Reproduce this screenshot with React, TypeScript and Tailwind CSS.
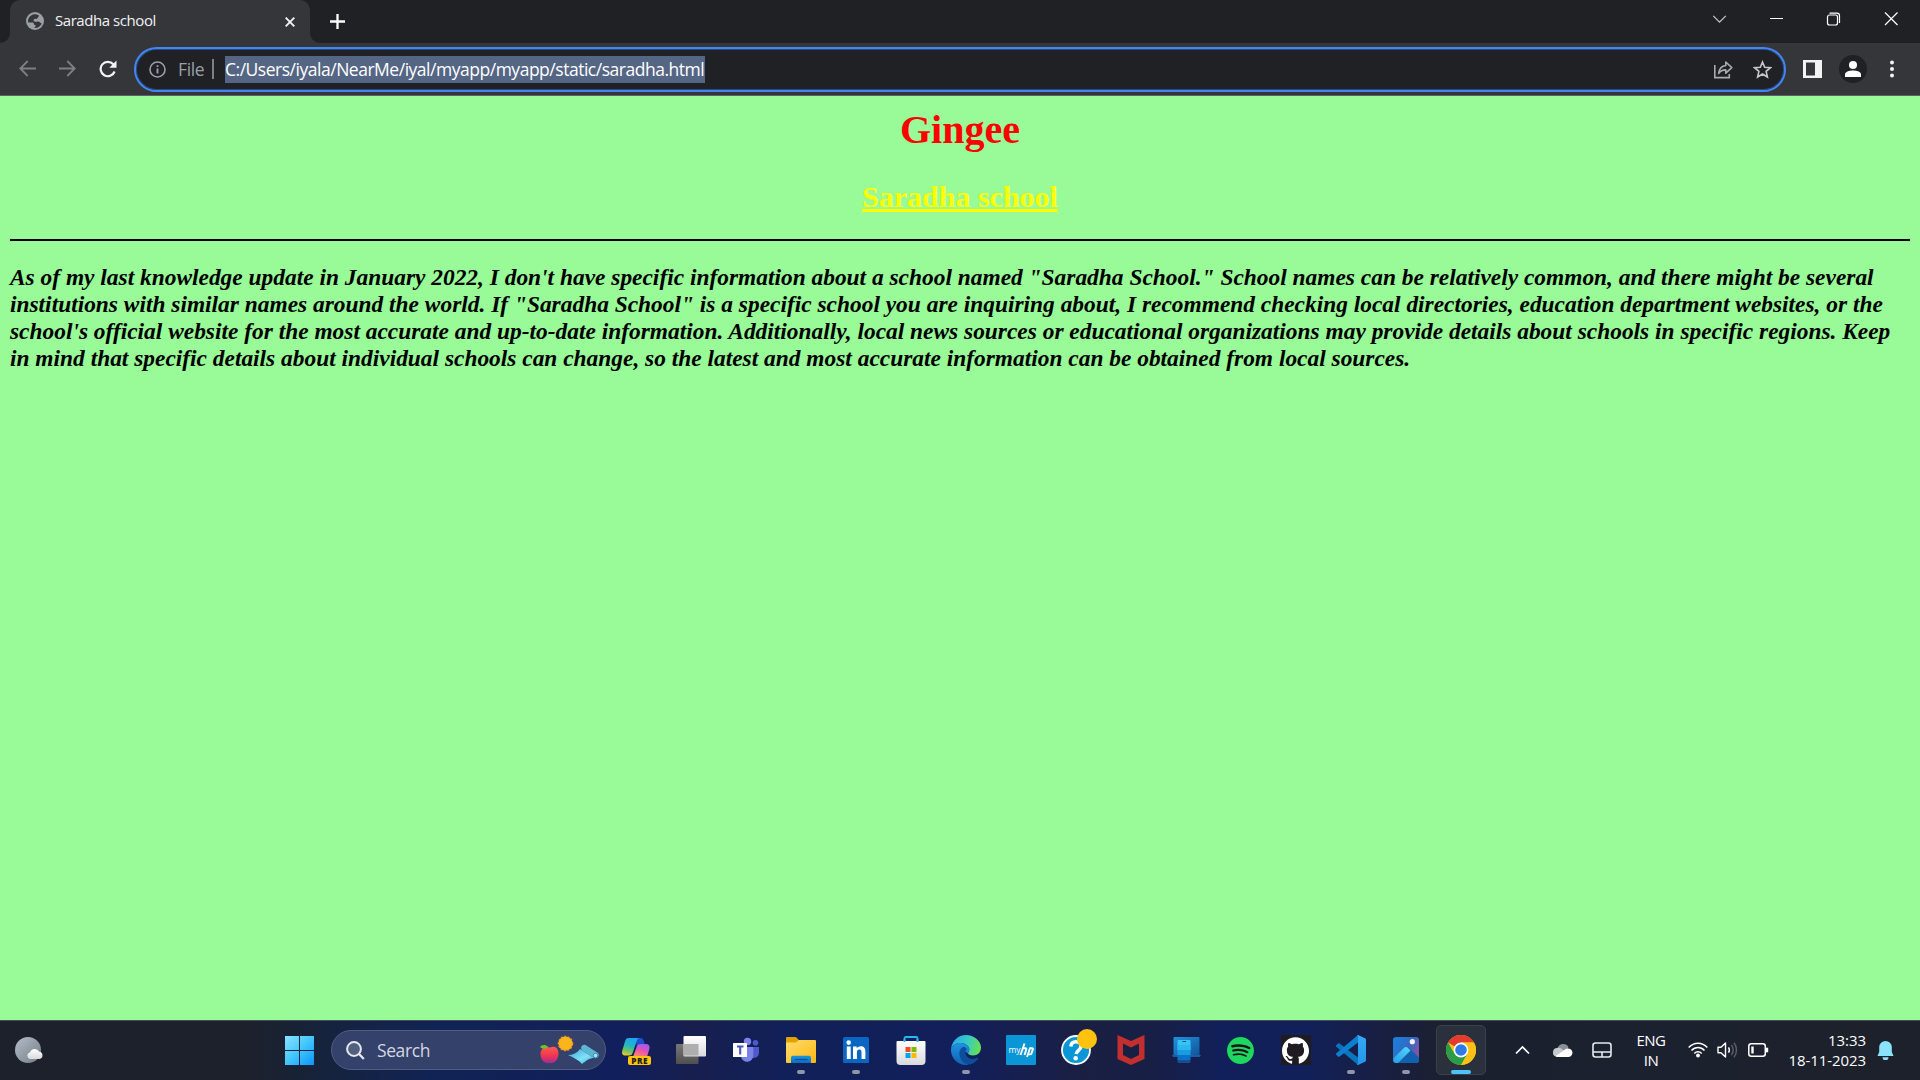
import type { ReactNode } from "react";
import { SiSpotify, SiGithub } from "react-icons/si";

const ui = "font-['Open_Sans','Noto_Sans',sans-serif]";

function TabStrip() {
  return (
    <div className="flex h-[43px] shrink-0 bg-[#202124]">
      <div className="flex w-[10px] items-end bg-[#35363a]">
        <div className="h-full w-full rounded-br-[10px] bg-[#202124]" />
      </div>
      <div className="w-[300px] bg-[#202124]">
        <div className="flex h-[43px] items-center rounded-t-[10px] bg-[#35363a] pl-4">
          <svg className="mt-[-1px] size-[18px]" viewBox="0 0 18 18">
            <circle cx="9" cy="9" r="9" fill="#9aa0a6" />
            <path d="M8 2.200C6 2.600 4 3.800 2.900 5.800 1.700 8 2 10 2.200 10.500c2 .1 3.500 0 4.500.1 1.700.3.800 1.600 1.600 2.200.5.300 1.400.1 1.400 1.200L8.200 16c3.600.4 6.300-1.500 7.500-4.500-1.700-.5-2-1.800-3.300-1.900-1.400-.1-2.800.7-4-.1-1.400-.9-.9-2.300.1-2.600 1.100-.3 1.700.5 2.700-.3.800-.6.300-1.200 1.300-1.800L13 3.400C11.300 2.400 9.700 2 8 2.200z" fill="#35363a" />
          </svg>
          <span className={`${ui} ml-[11px] mt-[-2px] w-[230px] whitespace-nowrap text-[15px] tracking-[-0.440px] text-[#f1f3f4]`}>
            Saradha school
          </span>
          <svg className="size-[10px] shrink-0" viewBox="0 0 10 10" stroke="#f1f3f4" strokeWidth="1.900">
            <path d="M.7.7l8.600 8.600M9.300.7L.7 9.300" />
          </svg>
        </div>
      </div>
      <div className="w-[10px] bg-[#35363a]">
        <div className="h-full w-full rounded-bl-[10px] bg-[#202124]" />
      </div>
      <svg className="ml-[10px] mt-[14px] size-[15px]" viewBox="0 0 15 15" stroke="#fff" strokeWidth="2.300">
        <path d="M7.500 0v15M0 7.500h15" />
      </svg>
      <div className="ml-auto flex h-[37px] items-center text-white">
        <svg className="w-[57px]" height="14" viewBox="0 0 57 14" fill="none" stroke="#c8cacc" strokeWidth="1.200">
          <path d="M21.300 3.800l6.200 6.300 6.300-6.300" />
        </svg>
        <svg className="w-[57px]" height="14" viewBox="0 0 57 14" stroke="currentColor" strokeWidth="1">
          <path d="M21 6.500h13" />
        </svg>
        <svg className="w-[57px]" height="14" viewBox="0 0 57 14" fill="none" stroke="currentColor" strokeWidth="1.200">
          <rect x="21.500" y="3" width="10" height="10" rx="2" />
          <path d="M23.500 1.200h7.500a2.500 2.500 0 0 1 2.500 2.500V11" />
        </svg>
        <svg className="w-[57px]" height="14" viewBox="0 0 57 14" stroke="currentColor" strokeWidth="1.200">
          <path d="M22 .5l12.500 12.500M34.500.5L22 13" />
        </svg>
      </div>
    </div>
  );
}

function Toolbar() {
  return (
    <div className="flex h-[53px] shrink-0 items-center border-b border-[#5d6164] bg-[#35363a]">
      <svg className="ml-[19px] mt-[-1px] size-[17px]" viewBox="0 0 17 17" fill="none" stroke="#7d7f83" strokeWidth="1.800">
        <path d="M17 8.500H1.500M8.700 1L1.300 8.500l7.400 7.500" />
      </svg>
      <svg className="ml-[23px] mt-[-1px] size-[17px]" viewBox="0 0 17 17" fill="none" stroke="#7d7f83" strokeWidth="1.800">
        <path d="M0 8.500h15.500M8.300 1l7.400 7.500L8.300 16" />
      </svg>
      <svg className="ml-[23px] mt-[-1px] size-[18px]" viewBox="0 0 18 18" fill="none" stroke="#f1f3f4" strokeWidth="2.200">
        <path d="M15.600 11.500a7.200 7.200 0 1 1-1.300-7.200l2 2.200" />
        <path d="M17.500.5v7.200h-7.200z" fill="#f1f3f4" stroke="none" />
      </svg>
      <div className="ml-[17px] flex h-[45px] w-[1652px] items-center rounded-full border-2 border-[#4285f4] bg-[#202124] shadow-[inset_0_0_0_1px_#2c4778]">
        <svg className="ml-[13px] size-[17px]" viewBox="0 0 17 17" fill="none" stroke="#9aa0a6" strokeWidth="1.600">
          <circle cx="8.500" cy="8.500" r="7.500" />
          <path d="M8.500 7.500v5M8.500 4.200v1.900" strokeWidth="1.900" />
        </svg>
        <span className={`${ui} ml-3 w-[34px] text-[17.500px] tracking-[-0.400px] text-[#9aa0a6]`}>File</span>
        <div className="h-5 w-[2px] bg-[#7c8085]" />
        <div className={`${ui} ml-[11px] h-[27px] w-[480px] whitespace-nowrap bg-[#556685] text-[17.500px] leading-[27px] tracking-[-0.480px] text-white`}>
          C:/Users/iyala/NearMe/iyal/myapp/myapp/static/saradha.html
        </div>
        <svg className="ml-auto size-[19px]" viewBox="0 0 19 19" fill="none" stroke="#a9abae" strokeWidth="1.600">
          <path d="M.8 5v12.600h14.500V14" />
          <path d="M4.600 13.500c.6-5 3-7.500 7.200-8V2l6 5.600-6 5.600v-3.300c-3.200 0-5.400 1-7.200 3.600z" strokeLinejoin="round" />
        </svg>
        <svg className="ml-[20px] mr-[12px] size-[19px]" viewBox="0 0 19 19" fill="none" stroke="#c6c9cb" strokeWidth="1.600">
          <path d="M9.500 2l2.200 5.200 5.700.5-4.300 3.700 1.300 5.600-4.900-3-4.900 3 1.300-5.600L1.600 7.700l5.700-.5z" />
        </svg>
      </div>
      <svg className="ml-[17px] h-[18px] w-[19px]" viewBox="0 0 19 18">
        <path fill="#f1f3f4" fillRule="evenodd" d="M0 0h19v18H0zM3 2.500v13h9v-13z" />
      </svg>
      <div className="ml-[17px] flex size-7 items-center justify-center rounded-full bg-[#202124]">
        <svg className="size-4" viewBox="0 0 16 16" fill="#fff">
          <circle cx="8" cy="4" r="4" />
          <path d="M0 16v-2.500C0 10.800 4 9.500 8 9.500s8 1.300 8 4V16z" />
        </svg>
      </div>
      <svg className="ml-[23px] h-[18px] w-1" viewBox="0 0 4 18" fill="#f1f3f4">
        <circle cx="2" cy="2.500" r="2" />
        <circle cx="2" cy="9" r="2" />
        <circle cx="2" cy="15.500" r="2" />
      </svg>
    </div>
  );
}

function Page() {
  return (
    <main className="flex-1 bg-[#98fb98] px-[10px] pt-[11px] font-['Liberation_Serif',serif] font-bold text-black">
      <h1 className="text-center text-[40px] leading-[46px] text-[#ff0000]">Gingee</h1>
      <h2 className="mt-[27px] text-center text-[30px] leading-[34px] text-[#ffff00] underline">Saradha school</h2>
      <div className="mt-[25px] h-[2px] bg-black" />
      <p className="mt-[23px] whitespace-nowrap text-[23.400px] italic leading-[27px] tracking-[0.004px]">
        As of my last knowledge update in January 2022, I don't have specific information about a school named "Saradha School." School names can be relatively common, and there might be several
        <br />
        institutions with similar names around the world. If "Saradha School" is a specific school you are inquiring about, I recommend checking local directories, education department websites, or the
        <br />
        school's official website for the most accurate and up-to-date information. Additionally, local news sources or educational organizations may provide details about schools in specific regions. Keep
        <br />
        in mind that specific details about individual schools can change, so the latest and most accurate information can be obtained from local sources.
      </p>
    </main>
  );
}

function Icon({ children }: { children: ReactNode }) {
  return (
    <svg className="size-[30px]" viewBox="0 0 30 30">
      {children}
    </svg>
  );
}

function TaskbarApp({ children, state }: { children: ReactNode; state?: "open" | "active" }) {
  return (
    <div className="flex w-[55px] items-center justify-center">
      <div
        className={
          state === "active"
            ? "relative flex size-[50px] items-center justify-center rounded-[5px] border border-[#3b414c] bg-[#2a303c]"
            : "relative flex size-[50px] items-center justify-center"
        }
      >
        {children}
        {state === "open" && <i className="absolute bottom-[1px] left-[21px] h-1 w-2 rounded-full bg-[#9095a8]" />}
        {state === "active" && <i className="absolute bottom-0 left-[14px] h-1 w-5 rounded-full bg-[#4cc2ff]" />}
      </div>
    </div>
  );
}

function Gradients() {
  return (
    <svg className="absolute size-0">
      <defs>
        <linearGradient id="win" x1="0" y1="0" x2="1" y2="1"><stop stopColor="#8be3ff" /><stop offset=".5" stopColor="#41c6fb" /><stop offset="1" stopColor="#0a96ff" /></linearGradient>
        <linearGradient id="moon" x1="0" y1="0" x2="1" y2="1"><stop stopColor="#b4bdc7" /><stop offset="1" stopColor="#737d89" /></linearGradient>
        <linearGradient id="apple" x1="0" y1="0" x2="0" y2="1"><stop stopColor="#ff5a52" /><stop offset=".55" stopColor="#f0364f" /><stop offset="1" stopColor="#a32a9a" /></linearGradient>
        <linearGradient id="mat" x1="0" y1="0" x2="1" y2="1"><stop stopColor="#3aa8d8" /><stop offset=".6" stopColor="#7fe3f7" /><stop offset="1" stopColor="#39a4cf" /></linearGradient>
        <linearGradient id="copA" x1=".6" y1="0" x2=".3" y2="1"><stop stopColor="#1fa4f4" /><stop offset=".45" stopColor="#24b5c4" /><stop offset=".75" stopColor="#6cc464" /><stop offset="1" stopColor="#e6c92e" /></linearGradient>
        <linearGradient id="copB" x1=".7" y1="0" x2=".3" y2="1"><stop stopColor="#9a5cf0" /><stop offset=".5" stopColor="#e552b5" /><stop offset="1" stopColor="#ff8a5c" /></linearGradient>
        <linearGradient id="white" x1="0" y1="0" x2="0" y2="1"><stop stopColor="#fff" /><stop offset="1" stopColor="#d9dadd" /></linearGradient>
        <linearGradient id="gray" x1="0" y1="0" x2="0" y2="1"><stop stopColor="#777" /><stop offset="1" stopColor="#4f4f4f" /></linearGradient>
        <linearGradient id="folder" x1="0" y1="0" x2="1" y2="1"><stop stopColor="#ffdc6b" /><stop offset="1" stopColor="#fcb813" /></linearGradient>
        <linearGradient id="pocket" x1="0" y1="0" x2="0" y2="1"><stop stopColor="#1a94e0" /><stop offset="1" stopColor="#0b6cbd" /></linearGradient>
        <linearGradient id="edgeA" x1="0" y1=".4" x2="1" y2=".6"><stop stopColor="#2aa7e8" /><stop offset=".5" stopColor="#35c9c8" /><stop offset="1" stopColor="#6be04e" /></linearGradient>
        <linearGradient id="edgeB" x1="0" y1="0" x2="0" y2="1"><stop stopColor="#1e94e0" /><stop offset="1" stopColor="#1160b4" /></linearGradient>
        <linearGradient id="phoneA" x1="0" y1="0" x2="1" y2="1"><stop stopColor="#2192dc" /><stop offset="1" stopColor="#10559c" /></linearGradient>
        <linearGradient id="photo" x1="0" y1="0" x2="1" y2=".6"><stop stopColor="#1582e0" /><stop offset=".6" stopColor="#3569c0" /><stop offset="1" stopColor="#8554a8" /></linearGradient>
        <linearGradient id="hill" x1="1" y1="0" x2="0" y2="1"><stop stopColor="#59d5fb" /><stop offset="1" stopColor="#229fe8" /></linearGradient>
        <linearGradient id="code" x1="0" y1="0" x2="0" y2="1"><stop stopColor="#37a9f5" /><stop offset="1" stopColor="#2196ec" /></linearGradient>
      </defs>
    </svg>
  );
}

function Taskbar() {
  return (
    <footer className={`${ui} flex h-[60px] shrink-0 items-center border-t border-[#474c5c] pb-px bg-[linear-gradient(90deg,#1d212b_0px,#1c212c_250px,#15233f_335px,#112354_430px,#111f5c_620px,#171f4e_690px,#112058_780px,#121f5b_960px,#1a1f42_1080px,#171f46_1160px,#11205a_1220px,#112058_1310px,#171f45_1370px,#1c202e_1450px,#1b212f_1600px,#1d212b_1920px)]`}>
      <Gradients />
      <svg className="ml-[14px] h-[28px] w-[30px]" viewBox="0 0 30 28">
        <circle cx="14" cy="14" r="13" fill="url(#moon)" />
        <path d="M16 23a3.500 3.500 0 0 1 0-6.800 5 5 0 0 1 9.200-.5A3.700 3.700 0 0 1 25.500 23z" fill="url(#white)" />
      </svg>
      <svg className="ml-[241px] size-[29px]" viewBox="0 0 29 29" fill="url(#win)">
        <path d="M0 0h14v14H0zM15 0h14v14H15zM0 15h14v14H0zM15 15h14v14H15z" />
      </svg>
      <div className="ml-[17px] flex h-10 w-[275px] items-center rounded-full border border-[#515c80] bg-[#34416a]">
        <svg className="ml-[14px] size-[19px]" viewBox="0 0 19 19" fill="none" stroke="#e6e8ee" strokeWidth="2">
          <circle cx="8" cy="8" r="6.900" fill="#52607f" />
          <path d="M12.800 12.800l5 5.200" strokeWidth="2.300" />
        </svg>
        <span className="ml-[12px] text-[17.500px] leading-[22px] tracking-[-0.400px] text-[#d3d7e2]">Search</span>
        <svg className="ml-auto mr-[6px] h-[30px] w-[60px]" viewBox="0 0 60 30">
          <path d="M11 12.500c5-2 8.500 1 8.500 6 0 6-4 10.500-9 9.500-5 1-9-3-9-9 0-5 4.500-8.500 9.500-6.500z" fill="url(#apple)" />
          <path d="M1 12c1.500-2.500 5.500-3 8-.2-2 2.500-5.500 2.700-8 .2z" fill="#6cc430" />
          <circle cx="26.500" cy="8.500" r="7" fill="#fbb51c" stroke="#f79420" strokeWidth="1.500" strokeDasharray="2 1.500" />
          <path d="M29 20c5 0 9-2 12-6l14 9c-4 0-7 2-12 6-3-4-8-6-14-9z" fill="url(#mat)" />
          <path d="M42 12.500c.5-2 2.500-3.500 4.500-2.500L59 18c2 2 0 6-4 5L42.500 15z" fill="#5cb6d2" />
          <circle cx="56.500" cy="20.500" r="2.300" fill="#a6e2ee" stroke="#3489ae" />
        </svg>
      </div>
      <div className="ml-[2px] flex">
        <TaskbarApp>
          <Icon>
            <path d="M14.500 3h5c2 0 2.700 1 3.300 3l1 3.500h-4.500c-2 0-3 .8-3.500 2.500z" fill="#1d50cf" />
            <path d="M7.500 3H19c-2 0-2.700 1.300-3.300 3L12 17c-.8 2.500-1.800 3.500-4 3.500H4.500c-3 0-4-2-3.200-5L4 6.500C4.700 4 5.500 3 7.500 3z" fill="url(#copA)" />
            <path d="M20 9h4.500c3.500 0 4.700 2 3.700 5.500L26 22h-14l3.800-10.500C16.500 9.700 17.500 9 20 9z" fill="url(#copB)" />
            <rect x="7" y="21" width="23" height="9" rx="2" fill="#ffc40c" />
            <text x="18.700" y="28.500" textAnchor="middle" fontFamily="Open Sans" fontWeight="800" fontSize="8.200" letterSpacing=".5" fill="#1b1b1b">PRE</text>
          </Icon>
        </TaskbarApp>
        <TaskbarApp>
          <Icon>
            <rect x="0" y="9" width="22.500" height="20" rx="1" fill="url(#gray)" />
            <rect x="7.500" y="1" width="22.500" height="20.500" rx="1" fill="url(#white)" />
            <path d="M7.500 9h15v11.500h-14l-1-1z" fill="#aeaeae" />
          </Icon>
        </TaskbarApp>
        <TaskbarApp>
          <Icon>
            <circle cx="24.500" cy="7.700" r="2.800" fill="#5059c9" />
            <path d="M20 12h8v6.500a5 5 0 0 1-8 3.500z" fill="#5059c9" />
            <circle cx="16.500" cy="6.500" r="3.700" fill="#7b83eb" />
            <path d="M10 12h12.300v8a6.200 6.200 0 0 1-12.300 1.500z" fill="#7b83eb" />
            <rect x="2" y="8" width="14" height="14" rx=".5" fill="#fff" />
            <path d="M6 11.500h6.500M9.200 11.500v8" stroke="#4b53bc" strokeWidth="2.100" />
          </Icon>
        </TaskbarApp>
        <TaskbarApp state="open">
          <Icon>
            <path d="M0 8V3a1 1 0 0 1 1-1h8.500c1.500 0 2 2.500 3.500 3v4z" fill="#e2a106" />
            <path d="M0 7.500h10L13 5h16a1 1 0 0 1 1 1v21a1 1 0 0 1-1 1H1a1 1 0 0 1-1-1z" fill="url(#folder)" />
            <path d="M5 28v-5.500a1.700 1.700 0 0 1 1.700-1.700h16.600a1.700 1.700 0 0 1 1.700 1.700V28z" fill="url(#pocket)" />
            <path d="M9 24.500h12.500" stroke="#0a4f92" strokeWidth="1.200" />
          </Icon>
        </TaskbarApp>
        <TaskbarApp state="open">
          <Icon>
            <rect x="2" y="2" width="26" height="26" rx="1.500" fill="#0a66c2" />
            <circle cx="7.700" cy="7.600" r="2.300" fill="#fff" />
            <path fill="#fff" d="M5.800 11.500h3.900V24H5.800zM12 11.500h3.700v1.700c.6-1 2-2 4-2 3.900 0 4.700 2.500 4.700 6V24h-3.900v-6c0-1.700-.2-3.400-2.200-3.400-2 0-2.400 1.600-2.400 3.300V24H12z" />
          </Icon>
        </TaskbarApp>
        <TaskbarApp>
          <Icon>
            <path d="M8.500 7V3.300a1.300 1.300 0 0 1 1.300-1.300h10.400a1.300 1.300 0 0 1 1.300 1.300V7" fill="none" stroke="#28b8f0" strokeWidth="1.800" />
            <path d="M.5 7A1 1 0 0 1 1.500 6h27a1 1 0 0 1 1 1v19a4 4 0 0 1-4 4h-21a4 4 0 0 1-4-4z" fill="url(#white)" />
            <path d="M7.600 6V4h1.800v3h-1.800zM20.600 6V4h1.800v3h-1.800z" fill="#28b8f0" />
            <path fill="#f25022" d="M9.500 12h5v5h-5z" /><path fill="#7fba00" d="M15.500 12h5v5h-5z" />
            <path fill="#00a4ef" d="M9.500 18h5v5h-5z" /><path fill="#ffb900" d="M15.500 18h5v5h-5z" />
          </Icon>
        </TaskbarApp>
        <TaskbarApp state="open">
          <Icon>
            <path d="M0 14C1 6 7 0 15 0s15 6 15 12.500c0 5-3.500 8-8 8-3 0-5-1-5-2.200 0-.7 1.300-1.300 1.300-4C18.300 11 14 8 9.500 8 5 8 1.500 10.500 0 14z" fill="url(#edgeA)" />
            <path d="M0 14c1.500-3.500 5-6 9.500-6 5 0 8.800 3 8.800 6.500 0 2.500-1.300 3-1.300 4C12 14 9 19 11.500 24c1 2.200 3.500 4.500 6 5.700C8 31.500 0 24 0 15z" fill="url(#edgeB)" />
            <path d="M13 11.500C9 13 8 17 8.500 20c.7 5 5 9.500 10 9.400 4-.5 7-3 8.700-5.900.3-.6-.2-1-.8-.7-5 2.700-11.500.5-12-5.300-.1-2 .8-3 1.600-3.500z" fill="#0d4d9b" />
          </Icon>
        </TaskbarApp>
        <TaskbarApp>
          <Icon>
            <rect width="30" height="30" rx="1" fill="#0a96d6" />
            <text x="2.500" y="18" fontFamily="Open Sans" fontSize="8.500" fill="#fff" textLength="12">my</text>
            <path fill="none" stroke="#fff" strokeWidth="1.900" d="M18.500 8.500L14.500 20M16.800 13.300h2.600c.9 0 1.200.4.900 1.200L18.500 20M24.300 12.500L21 22M24 13.300h1.900c1 0 1.200.4.900 1.300l-1.300 3.800c-.3.700-.7 1-1.400 1h-2.100" />
          </Icon>
        </TaskbarApp>
        <TaskbarApp>
          <div className="relative">
            <Icon>
              <circle cx="15" cy="15" r="14" fill="#0a96d6" stroke="#fff" strokeWidth="1.800" />
              <path d="M9.800 11.500c.4-3.500 2.600-4.800 5.200-4.800 3 0 5 1.700 5 4.500 0 4-4.500 4-4.900 8" fill="none" stroke="#fff" strokeWidth="3.500" />
              <circle cx="14.700" cy="23.300" r="2.300" fill="#fff" />
            </Icon>
            <i className="absolute -top-[6px] left-4 size-5 rounded-full bg-[#ffc20e]" />
          </div>
        </TaskbarApp>
        <TaskbarApp>
          <Icon>
            <path d="M1.500 0L15 6 28.500 0v24L15 30 1.500 24zM7 8.500V20l8 4 8-4V8.500L15 12.500z" fill="#c22f2e" fillRule="evenodd" />
          </Icon>
        </TaskbarApp>
        <TaskbarApp>
          <Icon>
            <path d="M2.500 3a1 1 0 0 1 1-1h24a1 1 0 0 1 1 1v17h-26z" fill="url(#phoneA)" />
            <path d="M1 20h29l-1.500 2H2z" fill="#1a5fa3" />
            <path d="M6.500 6a1 1 0 0 1 1-1h11a1 1 0 0 1 1 1v9h-13z" fill="#35c5f5" />
            <path d="M6.500 10h13v5.500h-13z" fill="#2fb5ee" /><path d="M6.500 15h13v5.500h-13z" fill="#1a9ce0" />
            <path d="M6.500 20h13v5h-13z" fill="#0a72cb" /><path d="M6.500 25h13v2a1 1 0 0 1-1 1h-11a1 1 0 0 1-1-1z" fill="#164f8a" />
            <path d="M11.500 6.500h3.500" stroke="#154c7d" strokeWidth="1" />
          </Icon>
        </TaskbarApp>
        <TaskbarApp>
          <div className="size-[27px] rounded-full bg-[#15131a]">
            <SiSpotify size={27} color="#1ed760" />
          </div>
        </TaskbarApp>
        <TaskbarApp>
          <div className="flex size-[30px] items-center justify-center bg-[#1f1b20]">
            <SiGithub size={27} color="#fff" />
          </div>
        </TaskbarApp>
        <TaskbarApp state="open">
          <Icon>
            <path d="M0 10.500l2-2c.5-.5 1-.5 1.600 0L22 22.500V30L.3 11.700c-.5-.4-.5-.8-.3-1.200z" fill="#0a74bd" />
            <path d="M0 19.500l2 2c.5.500 1 .5 1.600 0L22 7.500V0L.3 18.300c-.5.4-.5.8-.3 1.200z" fill="#0b80cf" />
            <path d="M22 0l7 3.300a1.700 1.700 0 0 1 1 1.500v20.400a1.700 1.700 0 0 1-1 1.500L22 30c-.8 0-1-.2-1.500-.7 1 .5 1.500-.3 1.500-1.300V2c0-1-.5-1.800-1.500-1.300C21 .2 21.200 0 22 0z" fill="url(#code)" />
          </Icon>
        </TaskbarApp>
        <TaskbarApp state="open">
          <Icon>
            <rect x="2" y="2" width="26" height="26" rx="3" fill="url(#photo)" />
            <path d="M13 16l2.500-2.500c1-1 2-1 3 0L28 22.500V25a3 3 0 0 1-3 3H5z" fill="#1260b0" />
            <path d="M2.300 23.500l10.500-10.500c1.300-1.200 3-1.200 4.200 0l2.500 2.500L7 28H5a3 3 0 0 1-2.700-3z" fill="url(#hill)" />
            <circle cx="21.300" cy="6.700" r="2.600" fill="#f4f2fb" />
          </Icon>
        </TaskbarApp>
        <TaskbarApp state="active">
          <Icon>
            <circle cx="15" cy="15" r="15" fill="#fbc116" />
            <path d="M15 15L2 7.500A15 15 0 0 1 28 7.500H15z" fill="#e33b2e" />
            <path d="M2 7.500A15 15 0 0 0 15 30l6.500-11.200L8.500 18.800z" fill="#2a9c48" />
            <path d="M15 30a15 15 0 0 0 13-22.500H15l6.500 11.300z" fill="#fbc116" />
            <circle cx="15" cy="15" r="7.400" fill="#fff" />
            <circle cx="15" cy="15" r="5.800" fill="#2f7ae8" />
          </Icon>
        </TaskbarApp>
      </div>
      <svg className="ml-[27px] h-[10px] w-[15px]" viewBox="0 0 15 10" fill="none" stroke="#fff" strokeWidth="1.700">
        <path d="M1 8.500L7.500 2 14 8.500" />
      </svg>
      <svg className="ml-[22px] h-[14px] w-[21px]" viewBox="0 0 21 14">
        <path d="M5.500 5.500a6 6 0 0 1 11-1.500l-2 4z" fill="#8b8f96" />
        <path d="M4 13.500a4.300 4.300 0 0 1 1-8.400c2-1 4.500 0 5.500 1.500L16 9z" fill="#c5c8cc" />
        <path d="M3.500 13L12 7.500a4 4 0 0 1 3.500-2 4.200 4.200 0 0 1 1.300 8.500H4.500z" fill="#fff" />
      </svg>
      <svg className="ml-[19px] h-[16px] w-[20px]" viewBox="0 0 20 16" fill="none" stroke="#e9eaec" strokeWidth="1.600">
        <rect x="1" y="1" width="18" height="14" rx="2.500" />
        <path d="M1 10h18M10 10v5" />
      </svg>
      <div className="ml-[13px] w-[52px] text-center text-[15px] leading-5 tracking-[-0.500px] text-white">
        ENG<br />IN
      </div>
      <svg className="ml-[11px] h-[16px] w-[20px]" viewBox="0 0 20 16" fill="none" stroke="#fff" strokeWidth="1.500">
        <path d="M.7 5.500C6-.3 14-.3 19.300 5.500M3.500 8.500c3.700-4 9.300-4 13 0M6.300 11.500c2-2.200 5.400-2.200 7.400 0" />
        <circle cx="10" cy="13.500" r="1.900" fill="#fff" stroke="none" />
      </svg>
      <svg className="ml-[9px] h-[18px] w-[22px]" viewBox="0 0 22 18" fill="none" stroke="#fff" strokeWidth="1.400">
        <path d="M1 6.300h3L8.500 2v14L4 11.700H1z" strokeLinejoin="round" />
        <path d="M11.500 6.300c1 1.500 1 3.900 0 5.400" />
        <path d="M14.500 4c2 3 2 7 0 10M17 1.800c3.300 4 3.300 10.400 0 14.400" stroke="#5a5f69" />
      </svg>
      <svg className="ml-[9px] h-[14px] w-[21px]" viewBox="0 0 21 14" fill="none" stroke="#fff" strokeWidth="1.500">
        <rect x=".8" y=".8" width="16.500" height="12.400" rx="2.500" />
        <path d="M4.500 3.500v7" strokeWidth="2.400" />
        <path d="M19 4.700v4.600" strokeWidth="2.400" />
      </svg>
      <div className="ml-[15px] w-[82px] whitespace-nowrap text-right text-[15px] leading-5 tracking-[-0.070px] text-white">
        13:33<br />18-11-2023
      </div>
      <svg className="ml-[11px] h-[19px] w-[17px]" viewBox="0 0 17 19" fill="#8be3fb">
        <path d="M8.500 0a6.300 6.300 0 0 1 6.300 6.300V11L16.500 15H.5l1.700-4V6.300A6.300 6.300 0 0 1 8.500 0z" />
        <path d="M5.500 16.300h6a3 3 0 0 1-6 0z" />
      </svg>
    </footer>
  );
}

export default function App() {
  return (
    <div className="flex h-[1080px] w-[1920px] flex-col overflow-hidden">
      <TabStrip />
      <Toolbar />
      <Page />
      <Taskbar />
    </div>
  );
}
